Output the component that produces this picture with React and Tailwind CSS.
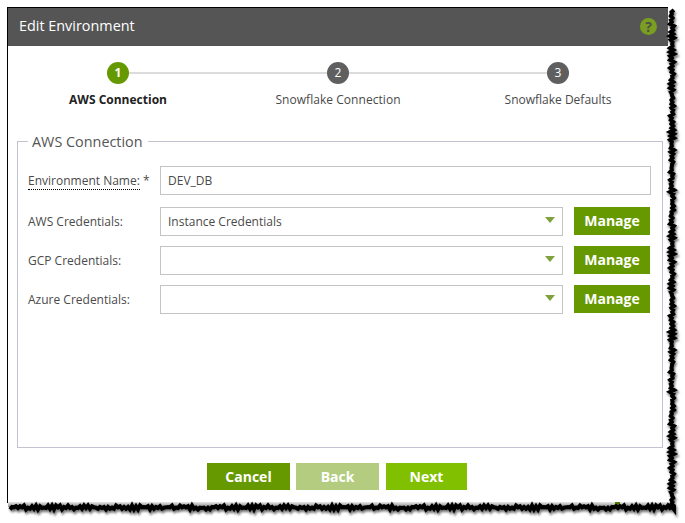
import React from "react";

// jagged line for the torn paper edge, seeded so it stays the same on every render
function tornPoints(start, end, fixed, vertical) {
  const points = [];
  let seed = 7;
  for (let pos = start, i = 0; pos < end; pos += 2, i++) {
    seed = (seed * 73 + 41) % 101;
    const offset = ((seed % 4) - 1.5) * 0.7 + (i % 2 === 0 ? 0.9 : -0.9);
    points.push(vertical ? `${fixed + offset},${pos}` : `${pos},${fixed + offset}`);
  }
  return points;
}

function TornEdge() {
  const right = tornPoints(10, 508, 672, true);
  const bottom = tornPoints(10, 676, 507.5, false);
  const line = [...right, ...bottom.reverse()].join(" ");
  return (
    <svg className="absolute left-0 top-0 pointer-events-none" width="685" height="523">
      <defs>
        <filter id="soft" x="-5%" y="-5%" width="110%" height="110%">
          <feGaussianBlur stdDeviation="1.2" />
        </filter>
        <linearGradient id="fade" x1="0" y1="0" x2="0" y2="1">
          <stop offset="0" stopColor="#e8e8e8" />
          <stop offset="1" stopColor="#8a8a8a" />
        </linearGradient>
      </defs>
      <rect x="8" y="502" width="660" height="5" fill="url(#fade)" />
      <rect x="615" y="502" width="5" height="5" fill="#4f7a00" />
      <polyline points={line} fill="none" stroke="#777" strokeWidth="4.5" filter="url(#soft)" transform="translate(1 2)" />
      <polyline points={line} fill="none" stroke="#000" strokeWidth="4" />
    </svg>
  );
}

function Step({ number, active }) {
  return (
    <div
      className={`w-[22px] h-[22px] rounded-full flex items-center justify-center text-white text-[12px] shrink-0 ${
        active ? "bg-[#669900] font-bold" : "bg-[#5f5f5f]"
      }`}
    >
      {number}
    </div>
  );
}

function SelectRow({ label, value, className }) {
  return (
    <div className={`flex items-center h-[29px] ${className}`}>
      <label className="w-[132px] shrink-0">{label}</label>
      <div className="w-[403px] h-[29px] border border-[#c4c4c4] flex items-center justify-between pl-[7px] pr-[7px] text-[#4a4a4a]">
        <span>{value}</span>
        <span className="w-0 h-0 border-l-[5px] border-r-[5px] border-t-[6px] border-l-transparent border-r-transparent border-t-[#7fa23c] -mt-[3px]" />
      </div>
      <button className="ml-[11px] w-[76px] h-[28px] pb-[2px] bg-[#669900] text-white font-bold text-[14px] -mt-[1px]">
        Manage
      </button>
    </div>
  );
}

function App() {
  return (
    <div className="relative w-[685px] h-[523px] bg-white overflow-hidden text-[12px] text-[#4a4a4a] font-['Open_Sans',sans-serif]">
      <div className="ml-[7px] mt-[7px] w-[661px] h-[496px] border-l border-t border-black flex flex-col">
        <div className="h-[38px] bg-[#555555] flex items-center justify-between pl-[11px] pr-[11px] pb-[3px] text-white text-[14.4px]">
          <span>Edit Environment</span>
          <span className="w-[17px] h-[17px] mt-[2px] rounded-full bg-[#7a9e1f] text-[#4f4f4f] font-bold text-[14px] flex items-center justify-center">
            ?
          </span>
        </div>

        <div className="flex items-center px-[99px] mt-[16px]">
          <Step number="1" active />
          <div className="flex-1 h-[2px] bg-[#dcdcdc]" />
          <Step number="2" />
          <div className="flex-1 h-[2px] bg-[#dcdcdc]" />
          <Step number="3" />
        </div>
        <div className="grid grid-cols-3 mt-[7px] leading-[18px]">
          <div className="text-center font-bold text-[#222]">AWS Connection</div>
          <div className="text-center tracking-[0.05px]">Snowflake Connection</div>
          <div className="text-center">Snowflake Defaults</div>
        </div>

        <fieldset className="ml-[9px] mt-[23px] w-[646px] h-[316px] border border-[#c2c2d0] pl-[10px] pr-[10px] pt-[15px]">
          <legend className="ml-0 pl-[4px] pr-[5px] text-[14.4px] leading-[19px] text-[#555]">AWS Connection</legend>
          <div className="flex items-center h-[29px]">
            <label className="w-[132px] shrink-0">
              <span className="border-b border-dotted border-black">Environment Name:</span> *
            </label>
            <div className="w-[491px] h-[29px] border border-[#c4c4c4] flex items-center pl-[7px] pt-[1px]">DEV_DB</div>
          </div>
          <SelectRow label="AWS Credentials:" value="Instance Credentials" className="mt-[12px]" />
          <SelectRow label="GCP Credentials:" className="mt-[10px]" />
          <SelectRow label="Azure Credentials:" className="mt-[10px]" />
        </fieldset>

        <div className="flex ml-[199px] mt-[15px] font-bold text-[14px] text-white">
          <button className="w-[83px] h-[27px] bg-[#669900]">Cancel</button>
          <button className="w-[83px] h-[27px] bg-[#b3cc80] ml-[6px]">Back</button>
          <button className="w-[81px] h-[27px] bg-[#80c000] ml-[7px]">Next</button>
        </div>
      </div>
      <TornEdge />
    </div>
  );
}

export default App;
